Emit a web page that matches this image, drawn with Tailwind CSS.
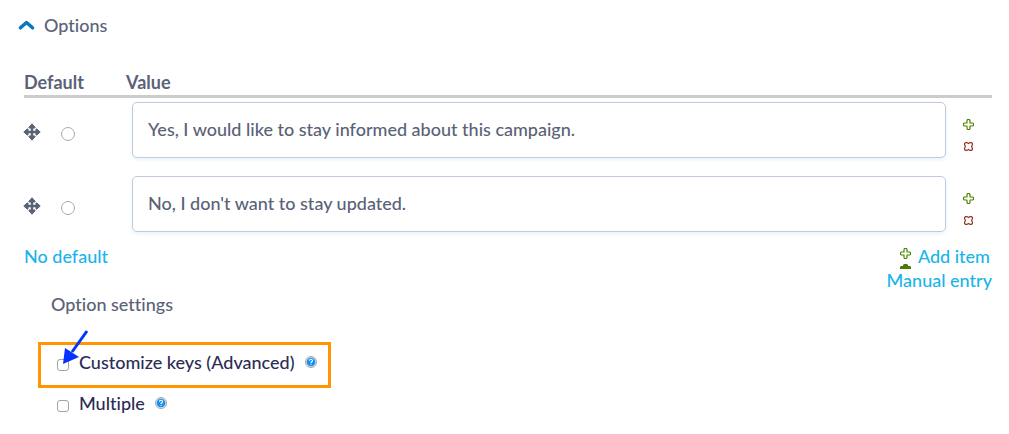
<!DOCTYPE html>
<html lang="en">
<head>
    <meta charset="UTF-8">
    <meta name="viewport" content="width=device-width, initial-scale=1.0">
    <title>Options</title>
    <script src="https://cdn.jsdelivr.net/npm/@tailwindcss/browser@4"></script>
</head>
<body class="bg-white font-['Lato',sans-serif] text-[18px] leading-6 font-medium text-[#5a6277] [font-variant-ligatures:none]">
    <!-- Shared icons -->
    <svg class="hidden">
        <symbol id="move" viewBox="0 0 18 18">
            <path fill="none" stroke="currentColor" stroke-width="2.400" d="M9 3v12M3 9h12"/>
            <path fill="currentColor" stroke="currentColor" stroke-linejoin="round" d="M9 .8l3 3.400v.8H6v-.8zM9 17.200l3-3.400V13H6v.8zM.8 9l3.400-3H5v6h-.8zM17.200 9l-3.400-3H13v6h.8z"/>
        </symbol>
        <symbol id="plus" viewBox="0 0 11 11">
            <path fill="#fff" stroke="#4f8500" stroke-width="1.200" stroke-linejoin="round" d="M4.500.5h2v.5l.5.500v2.500h2.500l1 .5v2l-1 .5H7v2.500l-.5 1h-2l-.5-1V7H1.500l-1-.5v-2l1-.5H4V1.500z"/>
        </symbol>
        <symbol id="cross" viewBox="0 0 9 9">
            <path fill="#fff" stroke="#97301f" stroke-width="1.200" stroke-linejoin="round" d="M1.500.6h1.300l1.700 1L6.200.6h1.300l.9.9v1.300L7.600 4.500l.8 1.700v1.300l-.9.9H6.200l-1.700-1-1.700 1H1.500l-.9-.9V6.200l.8-1.700-.8-1.700V1.500z"/>
        </symbol>
        <symbol id="help" viewBox="0 0 12 12">
            <circle cx="6" cy="6" r="5.500" fill="#e4e4e4" stroke="#a5a5a5"/>
            <circle cx="6" cy="6" r="4.300" fill="#1390f5"/>
            <path fill="none" stroke="#fff" stroke-width="1.100" d="M4.500 4.700c0-1.900 3-1.900 3 0 0 1-1.500 1-1.500 2.200M6 7.800v1"/>
        </symbol>
    </svg>

    <main class="pt-3 pr-[17px] pl-6">
        <button type="button" class="-ml-1.5 flex items-center gap-[9px] pt-px">
            <svg class="h-2.5 w-[17px]" viewBox="0 0 17 10">
                <path fill="none" stroke="#0678be" stroke-width="3.500" stroke-linecap="round" stroke-linejoin="round" d="M2.500 7.800l6-5.300 6 5.300"/>
            </svg>
            <span>Options</span>
        </button>

        <table class="mt-8 w-full border-separate border-spacing-0 text-left">
            <thead>
                <tr>
                    <th class="w-[102px] border-b-3 border-[#ccc] py-px font-bold" scope="col">Default</th>
                    <th class="border-b-3 border-[#ccc] py-px font-bold" scope="col">Value</th>
                    <th class="w-[46px] border-b-3 border-[#ccc]"></th>
                </tr>
            </thead>
            <tbody>
                <tr class="align-top">
                    <td class="pt-1 pb-3.5">
                        <div class="flex items-start gap-5 pt-[21px]">
                            <svg class="-ml-px h-[18px] w-[18px]" aria-label="Drag to re-order"><use href="#move"/></svg>
                            <input type="radio" name="default" aria-label="Set first option as default" class="mt-1 h-3.5 w-3.5 appearance-none rounded-full border border-[#a9a9a9] bg-white">
                        </div>
                    </td>
                    <td class="pt-1 pb-3.5 pl-1.5">
                        <input type="text" aria-label="First value" value="Yes, I would like to stay informed about this campaign." class="block h-14 w-full rounded-[5px] border border-[#bfcadb] bg-white px-[15px] pb-0.5 shadow-[0_2px_4px_#e6f3fb]">
                    </td>
                    <td class="pt-1 pr-px pb-3.5">
                        <div class="flex flex-col items-center gap-3 pt-[17px]">
                            <button type="button" aria-label="Add new item"><svg class="block h-[11px] w-[11px]"><use href="#plus"/></svg></button>
                            <button type="button" aria-label="Remove item"><svg class="block h-[9px] w-[9px]"><use href="#cross"/></svg></button>
                        </div>
                    </td>
                </tr>
                <tr class="align-top">
                    <td class="pt-1 pb-3">
                        <div class="flex items-start gap-5 pt-[21px]">
                            <svg class="-ml-px h-[18px] w-[18px]" aria-label="Drag to re-order"><use href="#move"/></svg>
                            <input type="radio" name="default" aria-label="Set second option as default" class="mt-1 h-3.5 w-3.5 appearance-none rounded-full border border-[#a9a9a9] bg-white">
                        </div>
                    </td>
                    <td class="pt-1 pb-3 pl-1.5">
                        <input type="text" aria-label="Second value" value="No, I don't want to stay updated." class="block h-14 w-full rounded-[5px] border border-[#bfcadb] bg-white px-[15px] pb-0.5 shadow-[0_2px_4px_#e6f3fb]">
                    </td>
                    <td class="pt-1 pr-px pb-3">
                        <div class="flex flex-col items-center gap-3 pt-[17px]">
                            <button type="button" aria-label="Add new item"><svg class="block h-[11px] w-[11px]"><use href="#plus"/></svg></button>
                            <button type="button" aria-label="Remove item"><svg class="block h-[9px] w-[9px]"><use href="#cross"/></svg></button>
                        </div>
                    </td>
                </tr>
            </tbody>
        </table>

        <div class="flex items-start justify-between text-[#18b4e9]">
            <a href="#">No default</a>
            <div class="flex flex-col items-end">
                <a href="#" class="flex gap-[7px] pr-0.5">
                    <svg class="mt-1 h-[21px] w-[11px]" viewBox="0 0 11 21">
                        <use href="#plus" width="11" height="11"/>
                        <path fill="#4f7a08" d="M0 21v-2l1-1h2v-1l1-1h3l1 1v1h2l1 1v2z"/>
                    </svg>
                    <span>Add item</span>
                </a>
                <a href="#" class="-mt-px">Manual entry</a>
            </div>
        </div>

        <section class="pl-3.5">
            <h2 class="pl-[13px]">Option settings</h2>
            <div class="relative mt-[26px] flex h-[46px] w-fit items-center border-3 border-[#ff9500] pr-[11px] pb-1.5 pl-4 text-[#2b2d55]">
                <input type="checkbox" id="customize" class="mt-1.5 mr-2.5 h-3 w-3 appearance-none rounded-[3px] border border-[#a3a3a3] bg-white">
                <label for="customize">Customize keys (Advanced)</label>
                <button type="button" aria-label="Help for customize keys" class="ml-2.5"><svg class="block h-3 w-3"><use href="#help"/></svg></button>
                <svg class="absolute -top-4 left-5 h-9 w-7" viewBox="0 0 28 36" aria-hidden="true">
                    <path stroke="#0433ff" stroke-width="3" d="M26 2L11 23"/>
                    <path fill="#0433ff" d="M2 35L4 19l14 9z"/>
                </svg>
            </div>
            <div class="mt-[3px] flex h-6 items-center pl-[19px] text-[#2b2d55]">
                <input type="checkbox" id="multiple" class="mt-1.5 mr-2.5 h-3 w-3 appearance-none rounded-[3px] border border-[#a3a3a3] bg-white">
                <label for="multiple">Multiple</label>
                <button type="button" aria-label="Help for multiple" class="ml-2.5"><svg class="block h-3 w-3"><use href="#help"/></svg></button>
            </div>
        </section>
    </main>
</body>
</html>
